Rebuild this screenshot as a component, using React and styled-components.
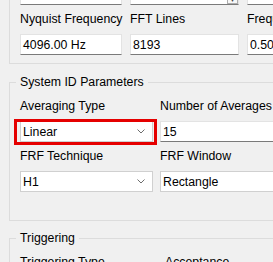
import React from "react"
import styled, { createGlobalStyle } from "styled-components"

const GlobalStyle = createGlobalStyle`
  html, body {
    margin: 0;
    padding: 0;
    background: #f0f0f0;
    overflow: hidden;
  }
  body {
    font-family: "Liberation Sans", Arial, sans-serif;
    font-size: 12.3px;
    color: #000;
  }
`

const Page = styled.div`
  width: 420px;
  height: 262px;
  overflow: hidden;
`

const TopGroup = styled.div`
  margin: -16px 0 0 9px;
  border: 1px solid #dcdcdc;
  border-top: none;
  padding: 0 10px 8px;
  display: flex;
  flex-direction: column;
  gap: 6px;
`

const GroupBox = styled.fieldset`
  margin: ${props => props.$top}px 0 0 9px;
  border: 1px solid #dcdcdc;
  padding: 8px 10px ${props => props.$bottom}px;
  min-width: 0;
`

const Legend = styled.legend`
  padding: 0 4px;
  margin-left: -4px;
  line-height: 16px;
`

const Grid = styled.div`
  display: grid;
  grid-template-columns: ${props => props.$cols};
  column-gap: ${props => props.$gap}px;
  row-gap: 6px;
`

const Field = styled.div`
  display: flex;
  flex-direction: column;
  gap: 7px;
`

const Label = styled.span`
  line-height: 16px;
  white-space: nowrap;
`

const TextBox = styled.div`
  height: 21px;
  box-sizing: border-box;
  background: #fff;
  border: 1px solid #e3e3e3;
  border-bottom-color: #7a7a7a;
  padding: 0 2px;
  display: flex;
  align-items: center;
  white-space: nowrap;
  overflow: hidden;
`

const SpinBox = styled(TextBox)`
  padding-right: 0;
  justify-content: flex-end;
`

const SpinButton = styled.div`
  width: 11px;
  height: 100%;
  box-sizing: border-box;
  border: 1px solid #adadad;
  background: #f7f7f7;
  display: flex;
  align-items: flex-end;
  justify-content: center;
  font-size: 6px;
  color: #444;
`

const ComboBox = styled.div`
  position: relative;
  height: 21px;
  box-sizing: border-box;
  background: #fff;
  border: 1px solid #d0d0d0;
  padding: 0 7px 0 2px;
  display: flex;
  align-items: center;
  justify-content: space-between;
  white-space: nowrap;
`

const Highlight = styled.div`
  position: absolute;
  left: -7px;
  right: -5px;
  top: -3px;
  bottom: -4px;
  border: 3px solid #e50000;
  pointer-events: none;
`

const Chevron = () => (
  <svg width="8" height="5" viewBox="0 0 8 5">
    <polyline points="0.5,0.5 4,4 7.5,0.5" fill="none" stroke="#6d6d6d" strokeWidth="1" />
  </svg>
)

const Combo = ({ value, highlighted }) => (
  <ComboBox>
    <span>{value}</span>
    <Chevron />
    {highlighted && <Highlight />}
  </ComboBox>
)

export default function App() {
  return (
    <Page>
      <GlobalStyle />
      <TopGroup>
        <Grid $cols="102px 109px 120px" $gap={8}>
          <TextBox />
          <SpinBox>
            <SpinButton>▼</SpinButton>
          </SpinBox>
          <TextBox />
        </Grid>
        <Grid $cols="102px 109px 120px" $gap={8}>
          <Field>
            <Label>Nyquist Frequency</Label>
            <TextBox>4096.00 Hz</TextBox>
          </Field>
          <Field>
            <Label>FFT Lines</Label>
            <TextBox>8193</TextBox>
          </Field>
          <Field>
            <Label>Frequency Resolution</Label>
            <TextBox>0.50 Hz</TextBox>
          </Field>
        </Grid>
      </TopGroup>

      <GroupBox $top={10} $bottom={28}>
        <Legend>System ID Parameters</Legend>
        <Grid $cols="133px 133px" $gap={7}>
          <Field>
            <Label>Averaging Type</Label>
            <Combo value="Linear" highlighted />
          </Field>
          <Field>
            <Label>Number of Averages</Label>
            <TextBox>15</TextBox>
          </Field>
          <Field>
            <Label>FRF Technique</Label>
            <Combo value="H1" />
          </Field>
          <Field>
            <Label>FRF Window</Label>
            <Combo value="Rectangle" />
          </Field>
        </Grid>
      </GroupBox>

      <GroupBox $top={9} $bottom={28}>
        <Legend>Triggering</Legend>
        <Grid $cols="138px 133px" $gap={7}>
          <Field>
            <Label>Triggering Type</Label>
          </Field>
          <Field>
            <Label>Acceptance</Label>
          </Field>
        </Grid>
      </GroupBox>
    </Page>
  )
}
